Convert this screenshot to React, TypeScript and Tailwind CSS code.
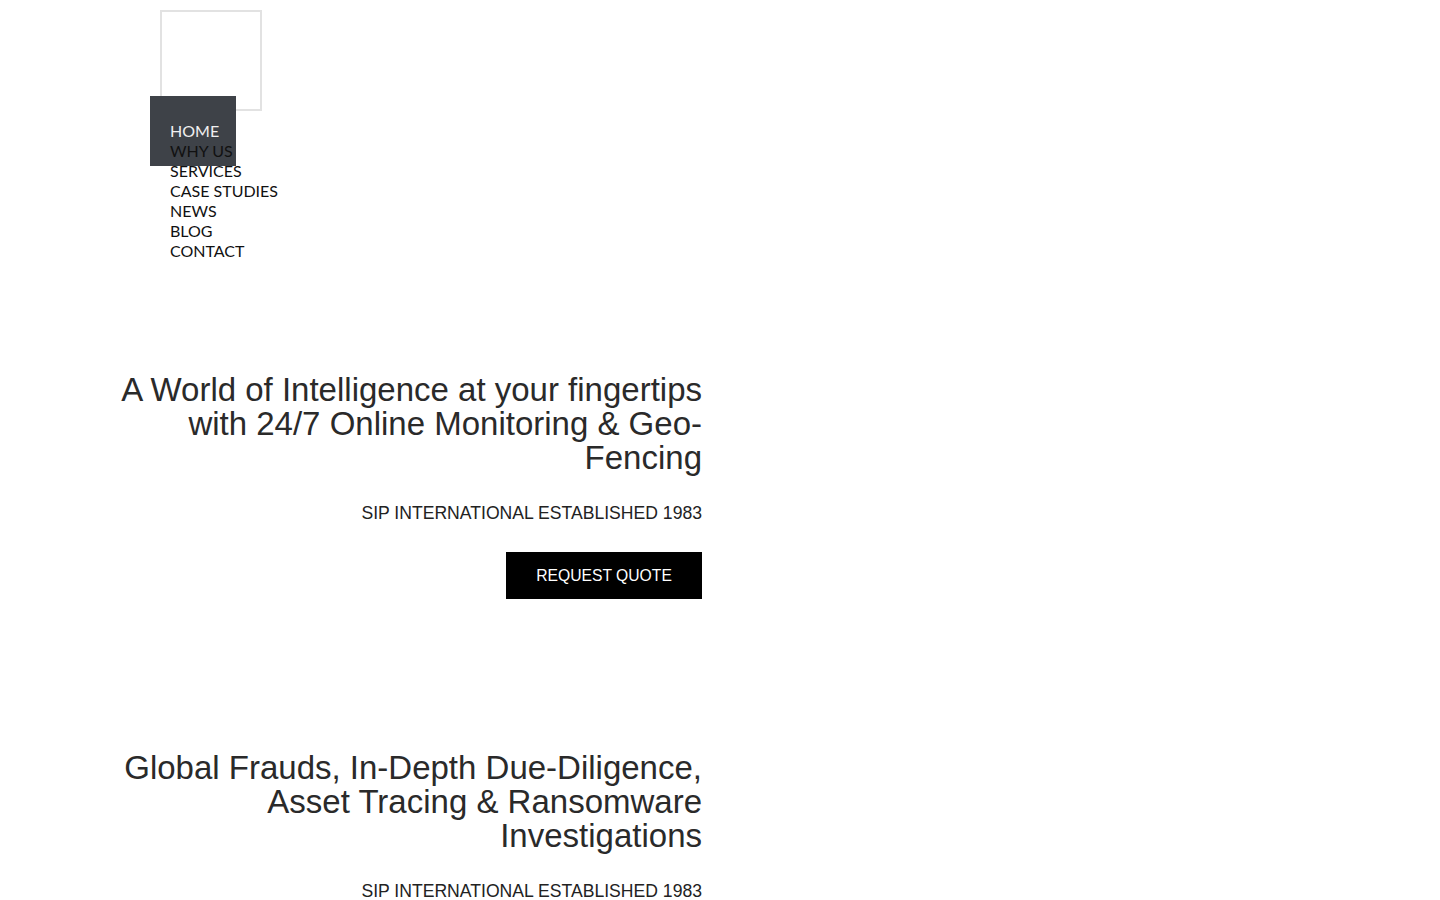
import React from 'react';

const navItems = ['HOME', 'WHY US', 'SERVICES', 'CASE STUDIES', 'NEWS', 'BLOG', 'CONTACT'];

const Hero = ({ title, button }: { title: string; button?: boolean }) => (
  <section className="ml-[102px] w-[600px] text-right font-[family-name:Liberation_Sans,Arial,sans-serif]">
    <h2 className="text-[33px] leading-[34px] text-[#2a2a2a]">{title}</h2>
    <p className="mt-[26px] text-[17.6px] leading-6 text-[#222]">SIP INTERNATIONAL ESTABLISHED 1983</p>
    {button && (
      <div className="mt-[27px] flex justify-end">
        <a href="#" className="flex h-[47px] w-[196px] items-center justify-center bg-black text-[15.7px] text-white">
          REQUEST QUOTE
        </a>
      </div>
    )}
  </section>
);

const App = () => {
  return (
    <div className="min-h-screen bg-white">
      <header className="relative pt-[10px]">
        <div className="ml-[160px] h-[101px] w-[102px] border-2 border-[#e2e2e2]" />
        <div className="absolute left-[150px] top-[96px] h-[70px] w-[86px] bg-[#3e4248]" />
        <nav className="relative z-10 ml-[170px] mt-[10px] font-[family-name:Lato,sans-serif] text-[16px] leading-5 text-[#111]">
          {navItems.map((item, i) => (
            <a key={item} href="#" className={`block w-fit ${i === 0 ? 'text-[#f0f0f0]' : ''}`}>
              {item}
            </a>
          ))}
        </nav>
      </header>

      <div className="mt-[112px]">
        <Hero title="A World of Intelligence at your fingertips with 24/7 Online Monitoring & Geo-Fencing" button />
      </div>
      <div className="mt-[152px]">
        <Hero title="Global Frauds, In-Depth Due-Diligence, Asset Tracing & Ransomware Investigations" />
      </div>
    </div>
  );
};

export default App;
